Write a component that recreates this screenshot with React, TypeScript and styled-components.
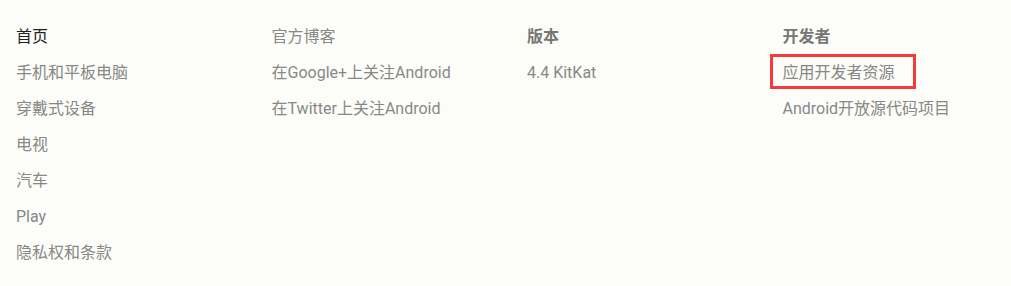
import React from 'react';
import styled, { createGlobalStyle } from 'styled-components';

const GlobalStyle = createGlobalStyle`
  html, body {
    margin: 0;
    padding: 0;
    background: #fcfcf9;
  }
  body {
    font-family: Roboto, 'Noto Sans CJK SC', sans-serif;
  }
`;

const Footer = styled.nav`
  display: grid;
  grid-template-columns: repeat(4, 255.5px);
  padding: 19px 0 0 16px;
  height: 286px;
  box-sizing: border-box;
`;

const Column = styled.ul`
  list-style: none;
  margin: 0;
  padding: 0;
  display: flex;
  flex-direction: column;
  align-items: flex-start;
`;

const Item = styled.li<{ $head?: 'dark' | 'bold' | 'plain' }>`
  position: relative;
  font-size: 16px;
  line-height: 36px;
  white-space: nowrap;
  color: ${(p) => (p.$head === 'dark' ? '#222' : p.$head === 'bold' ? '#777' : '#888')};
  font-weight: ${(p) => (p.$head === 'bold' ? 700 : 400)};
  cursor: pointer;
`;

const Highlight = styled.span`
  position: absolute;
  left: -13px;
  right: -21px;
  top: -1px;
  bottom: 2px;
  border: 3px solid #f23c3c;
  pointer-events: none;
`;

const columns: { head: string; style: 'dark' | 'bold' | 'plain'; links: string[] }[] = [
  {
    head: '首页',
    style: 'dark',
    links: ['手机和平板电脑', '穿戴式设备', '电视', '汽车', 'Play', '隐私权和条款'],
  },
  {
    head: '官方博客',
    style: 'plain',
    links: ['在Google+上关注Android', '在Twitter上关注Android'],
  },
  { head: '版本', style: 'bold', links: ['4.4 KitKat'] },
  { head: '开发者', style: 'bold', links: ['应用开发者资源', 'Android开放源代码项目'] },
];

const App = () => (
  <>
    <GlobalStyle />
    <Footer>
      {columns.map((col) => (
        <Column key={col.head}>
          <Item $head={col.style}>{col.head}</Item>
          {col.links.map((link) => (
            <Item key={link}>
              {link}
              {link === '应用开发者资源' && <Highlight />}
            </Item>
          ))}
        </Column>
      ))}
    </Footer>
  </>
);

export default App;
